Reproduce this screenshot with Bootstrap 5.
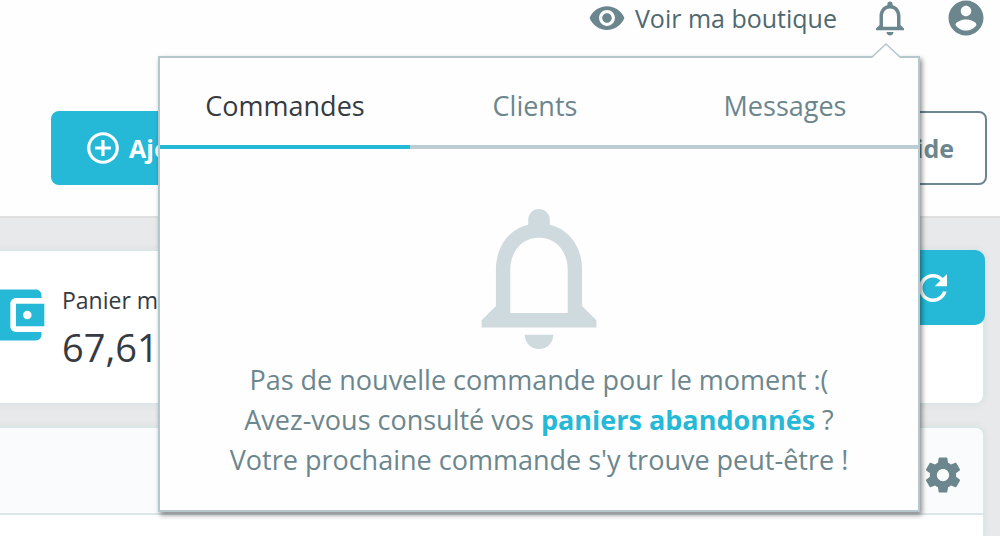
<!DOCTYPE html>
<html lang="fr">
<head>
<meta charset="utf-8">
<meta name="viewport" content="width=device-width, initial-scale=1">
<title>Tableau de bord</title>
<link href="https://cdn.jsdelivr.net/npm/bootstrap@5.3.0/dist/css/bootstrap.min.css" rel="stylesheet">
<script defer src="https://cdn.jsdelivr.net/npm/bootstrap@5.3.0/dist/js/bootstrap.bundle.min.js"></script>
<style>
  :root { --brand: #25b9d7; --slate: #6c868e; --line: #bbcdd2; --ink: #363a41; }
  body { font-family: "Open Sans", sans-serif; font-size: 25px; line-height: 40px; color: var(--ink); background: #e8e9eb; min-height: 100vh; display: flex; flex-direction: column; }
  svg { display: block; flex: none; fill: currentColor; }
  .i-sm { width: 38px; height: 38px; }
  .i-md { width: 42px; height: 42px; }
  .i-lg { width: 68px; height: 68px; }
  .i-xl { width: 116px; height: 140px; }
  .page-head { background: #fefefe; border-bottom: 2px solid #dfdfdf; padding: 0 13px 31px 51px; }
  .topbar { height: 36px; margin-bottom: 75px; color: var(--slate); }
  .topbar .account { margin-left: 34px; }
  .shop-link { color: #4f6870; gap: 9px; }
  .tool-btn { height: 74px; border-radius: 8px; font-size: 25px; font-weight: 700; border: 2px solid var(--brand); padding: 0 31px; }
  .tool-btn.primary-tool { background: var(--brand); color: #fff; gap: 7px; }
  .tool-btn.help-tool { background: #fff; border-color: var(--slate); color: var(--slate); }
  .notif-panel { position: absolute; z-index: 10; top: 56px; right: 80px; width: 762px; height: 456px; background: #fefefe; border: 2px solid #b3c7cd; box-shadow: 2px 3px 5px rgba(0,0,0,.45); }
  .notif-arrow { position: absolute; top: -15px; right: 18px; width: 28px; height: 15px; }
  .notif-tabs { border-bottom: 4px solid var(--line); }
  .notif-tabs button { width: 250px; height: 91px; margin-bottom: -4px; padding: 8px 0 0; border: 0; border-bottom: 4px solid transparent; background: none; color: var(--slate); font-size: 27px; }
  .notif-tabs button.active { color: var(--ink); border-color: var(--brand); }
  .notif-body { color: var(--slate); padding-top: 60px; font-size: 27px; }
  .notif-body svg { color: #cedadd; margin-bottom: 11px; }
  .notif-body a { color: var(--brand); font-weight: 700; }
  .panels { padding: 31px 15px 0 0; gap: 21px; }
  .panel { background: #fff; border: 2px solid #dbe6e9; border-radius: 10px; margin-left: -20px; box-shadow: 0 0 8px rgba(0,0,0,.05); }
  .kpi { height: 156px; }
  .kpi-label { font-size: 23px; line-height: 34px; padding-top: 6px; }
  .kpi-value { font-size: 38px; line-height: 60px; }
  .refresh { width: 104px; height: 75px; margin: -1px -2px 0 0; border: 0; border-radius: 0 10px 10px 0; background: var(--brand); color: #fff; }
  .panel-last { border-bottom: 0; border-radius: 10px 10px 0 0; }
  .panel-head { height: 87px; background: #fafbfc; border-bottom: 2px solid #dbe6e9; border-radius: 8px 8px 0 0; padding-right: 19px; }
  .bare { border: 0; background: none; padding: 0; color: var(--slate); }
</style>
</head>
<body>
<header class="page-head">
  <div class="topbar d-flex justify-content-end align-items-center">
    <a href="#" class="shop-link d-flex align-items-center text-decoration-none">
      <svg class="i-sm" viewBox="0 0 24 24" color="#6c868e"><path d="M12 4.500C7 4.500 2.730 7.610 1 12c1.730 4.390 6 7.500 11 7.500s9.270-3.110 11-7.500c-1.730-4.390-6-7.500-11-7.500zM12 17c-2.760 0-5-2.240-5-5s2.240-5 5-5 5 2.240 5 5-2.240 5-5 5zm0-8c-1.660 0-3 1.340-3 3s1.340 3 3 3 3-1.340 3-3-1.340-3-3-3z"/></svg>
      Voir ma boutique
    </a>
    <button class="bare ms-4 ps-2" type="button" aria-label="Notifications" aria-expanded="true">
      <svg class="i-md" viewBox="0 0 24 24"><path d="M12 22c1.100 0 2-.9 2-2h-4c0 1.100.9 2 2 2zm6-6v-5c0-3.070-1.630-5.640-4.500-6.320V4c0-.83-.67-1.500-1.500-1.500s-1.500.67-1.500 1.500v.68C7.640 5.360 6 7.920 6 11v5l-2 2v1h16v-1l-2-2zm-2 1H8v-6c0-2.480 1.510-4.500 4-4.500s4 2.020 4 4.500v6z"/></svg>
    </button>
    <button class="bare account" type="button" aria-label="Mon compte">
      <svg class="i-md" viewBox="0 0 24 24"><path d="M12 2C6.480 2 2 6.480 2 12s4.480 10 10 10 10-4.480 10-10S17.520 2 12 2zm0 3c1.660 0 3 1.340 3 3s-1.340 3-3 3-3-1.340-3-3 1.340-3 3-3zm0 14.200c-2.500 0-4.710-1.280-6-3.220.03-1.990 4-3.080 6-3.080 1.990 0 5.970 1.090 6 3.080-1.290 1.940-3.500 3.220-6 3.220z"/></svg>
    </button>
  </div>
  <div class="d-flex justify-content-between">
    <button class="tool-btn primary-tool d-flex align-items-center" type="button">
      <svg class="i-sm" viewBox="0 0 24 24"><path d="M13 7h-2v4H7v2h4v4h2v-4h4v-2h-4V7zm-1-5C6.490 2 2 6.490 2 12s4.490 10 10 10 10-4.490 10-10S17.510 2 12 2zm0 18c-4.410 0-8-3.590-8-8s3.590-8 8-8 8 3.590 8 8-3.590 8-8 8z"/></svg>
      Ajouter
    </button>
    <button class="tool-btn help-tool" type="button">Aide</button>
  </div>
</header>

<section class="notif-panel" aria-label="Notifications">
  <svg class="notif-arrow" viewBox="0 0 28 15"><path d="M0 15L14 1l14 14z" fill="#fefefe"/><path d="M0 14L14 1l14 13" fill="none" stroke="#b3c7cd" stroke-width="1.500"/></svg>
  <div class="notif-tabs d-flex" role="tablist">
    <button class="active" type="button" role="tab" aria-selected="true">Commandes</button>
    <button type="button" role="tab" aria-selected="false">Clients</button>
    <button type="button" role="tab" aria-selected="false">Messages</button>
  </div>
  <div class="notif-body text-center">
    <svg class="i-xl mx-auto" viewBox="4 2.500 16 19.500"><path d="M12 22c1.100 0 2-.9 2-2h-4c0 1.100.9 2 2 2zm6-6v-5c0-3.070-1.630-5.640-4.500-6.320V4c0-.83-.67-1.500-1.500-1.500s-1.500.67-1.500 1.500v.68C7.640 5.360 6 7.920 6 11v5l-2 2v1h16v-1l-2-2zm-2 1H8v-6c0-2.480 1.510-4.500 4-4.500s4 2.020 4 4.500v6z"/></svg>
    <p class="m-0">Pas de nouvelle commande pour le moment :(<br>Avez-vous consulté vos <a href="#" class="text-decoration-none">paniers abandonnés</a> ?<br>Votre prochaine commande s'y trouve peut-être !</p>
  </div>
</section>

<main class="panels d-flex flex-column flex-grow-1">
  <section class="panel kpi d-flex align-items-start justify-content-between">
    <div class="d-flex align-items-center h-100 text-nowrap">
      <svg class="i-lg mb-4" viewBox="0 0 24 24" color="#25b9d7"><path d="M21 18v1c0 1.100-.9 2-2 2H5c-1.110 0-2-.9-2-2V5c0-1.100.89-2 2-2h14c1.100 0 2 .9 2 2v1h-9c-1.110 0-2 .9-2 2v8c0 1.100.89 2 2 2h9zm-9-2h10V8H12v8zm4-2.500c-.83 0-1.500-.67-1.500-1.500s.67-1.500 1.500-1.500 1.500.67 1.500 1.500-.67 1.500-1.500 1.500z"/></svg>
      <div class="ps-2 ms-1">
        <div class="kpi-label">Panier moyen</div>
        <div class="kpi-value">67,61 €</div>
      </div>
    </div>
    <button class="refresh d-flex align-items-center justify-content-center" type="button" aria-label="Actualiser">
      <svg class="i-md" viewBox="0 0 24 24"><path d="M17.650 6.350C16.200 4.900 14.210 4 12 4c-4.420 0-7.990 3.580-7.990 8s3.570 8 7.990 8c3.730 0 6.840-2.550 7.730-6h-2.080c-.82 2.330-3.040 4-5.650 4-3.310 0-6-2.690-6-6s2.690-6 6-6c1.660 0 3.140.69 4.220 1.780L13 11h7V4l-2.350 2.350z"/></svg>
    </button>
  </section>
  <section class="panel panel-last flex-grow-1">
    <div class="panel-head d-flex align-items-center justify-content-end">
      <button class="bare pt-2" type="button" aria-label="Paramètres">
        <svg class="i-md" viewBox="0 0 24 24"><path d="M19.430 12.980c.04-.32.07-.64.07-.98s-.03-.66-.07-.98l2.110-1.650c.19-.15.24-.42.12-.64l-2-3.460c-.12-.22-.39-.3-.61-.22l-2.490 1c-.52-.4-1.080-.73-1.690-.98l-.38-2.650C14.460 2.180 14.250 2 14 2h-4c-.25 0-.46.18-.49.42l-.38 2.650c-.61.25-1.170.59-1.690.98l-2.490-1c-.23-.09-.49 0-.61.22l-2 3.460c-.13.22-.07.49.12.64l2.110 1.650c-.04.32-.07.65-.07.98s.03.66.07.98l-2.110 1.650c-.19.15-.24.42-.12.64l2 3.460c.12.22.39.3.61.22l2.490-1c.52.4 1.080.73 1.690.98l.38 2.650c.03.24.24.42.49.42h4c.25 0 .46-.18.49-.42l.38-2.650c.61-.25 1.170-.59 1.690-.98l2.490 1c.23.09.49 0 .61-.22l2-3.460c.12-.22.07-.49-.12-.64l-2.110-1.650zM12 15.500c-1.930 0-3.500-1.570-3.500-3.500s1.570-3.500 3.500-3.500 3.500 1.570 3.500 3.500-1.570 3.500-3.500 3.500z"/></svg>
      </button>
    </div>
  </section>
</main>
</body>
</html>
